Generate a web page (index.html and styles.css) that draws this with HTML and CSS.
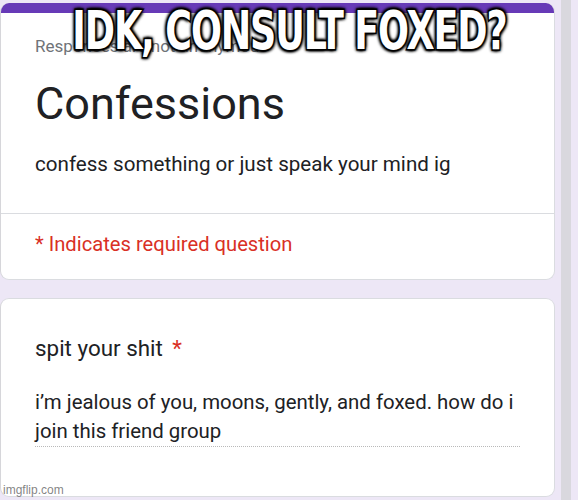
FILE: index.html
```html
<!DOCTYPE html>
<html>
<head>
<meta charset="utf-8">
<link rel="stylesheet" href="styles.css">
</head>
<body>
<div class="page">
  <main class="forms">
    <section class="card header-card">
      <div class="accent"></div>
      <div class="header-body">
        <div class="account">Responses are not anonymous</div>
        <h1 class="title">Confessions</h1>
        <p class="desc">confess something or just speak your mind ig</p>
      </div>
      <div class="required-note">* Indicates required question</div>
    </section>
    <section class="card question-card">
      <div class="question">spit your shit <span class="star">*</span></div>
      <div class="answer">i’m jealous of you, moons, gently, and foxed. how do i join this friend group</div>
    </section>
  </main>
  <div class="scrollbar"></div>
</div>
<div class="meme-caption"><span class="meme-text">IDK, CONSULT FOXED?</span></div>
<div class="watermark">imgflip.com</div>
</body>
</html>
```
FILE: styles.css
```css
html, body {
  margin: 0;
  padding: 0;
}
body {
  background: #ede7f6;
  font-family: Roboto, "Noto Sans", "Liberation Sans", sans-serif;
  color: #202124;
  width: 578px;
  height: 500px;
  overflow: hidden;
  position: relative;
}
.page {
  display: flex;
  gap: 6px;
  height: 500px;
}
.forms {
  width: 555px;
  display: flex;
  flex-direction: column;
  gap: 18px;
  padding-top: 3px;
  box-sizing: border-box;
}
.card {
  background: #fff;
  border: 1px solid #dadce0;
  border-left-color: #d6d6da;
  border-radius: 9px;
  overflow: hidden;
  box-sizing: border-box;
}
.header-card {
  height: 277px;
  border-top: none;
}
.accent {
  height: 10px;
  background: #673ab7;
}
.header-body {
  padding: 22px 34px 36px;
  border-bottom: 1px solid #dadce0;
}
.account {
  font-size: 17px;
  line-height: 22px;
  color: #6f7378;
  white-space: nowrap;
}
.title {
  margin: 20px 0 0;
  font-size: 45px;
  line-height: 54px;
  font-weight: 400;
  letter-spacing: 0;
}
.desc {
  margin: 20px 0 0;
  font-size: 20.6px;
  line-height: 26px;
}
.required-note {
  padding: 17px 34px 0;
  font-size: 20.2px;
  line-height: 26px;
  color: #d93025;
}
.question-card {
  height: 199px;
  padding: 35px 34px 0;
}
.question {
  font-size: 22.4px;
  line-height: 28px;
}
.star {
  color: #d93025;
  margin-left: 4px;
}
.answer {
  margin-top: 26px;
  width: 485px;
  font-size: 20.4px;
  line-height: 29px;
  border-bottom: 1px dotted #b9b9b9;
}
.scrollbar {
  width: 10px;
  height: 500px;
  background: #d9d8de;
}
.meme-caption {
  position: absolute;
  top: 4px;
  left: 0;
  width: 578px;
  display: flex;
  justify-content: center;
}
.meme-text {
  display: inline-block;
  white-space: nowrap;
  transform: scaleX(0.75);
  transform-origin: 50% 50%;
  font-family: "DejaVu Sans Condensed", "Liberation Sans Narrow", "Liberation Sans", sans-serif;
  font-weight: 700;
  font-size: 54px;
  line-height: 54px;
  color: #fff;
  letter-spacing: -1.5px;
  -webkit-text-stroke: 3px #000;
  paint-order: stroke fill;
  text-shadow: 2px 2px 3px #000, -2px 2px 3px #000, 2px -2px 3px #000, -2px -2px 3px #000, 0 0 5px #000;
}
.watermark {
  position: absolute;
  left: 3px;
  bottom: 3px;
  font-family: "Liberation Sans", Arial, sans-serif;
  font-size: 12px;
  line-height: 14px;
  color: rgba(90, 90, 90, 0.75);
}
```
